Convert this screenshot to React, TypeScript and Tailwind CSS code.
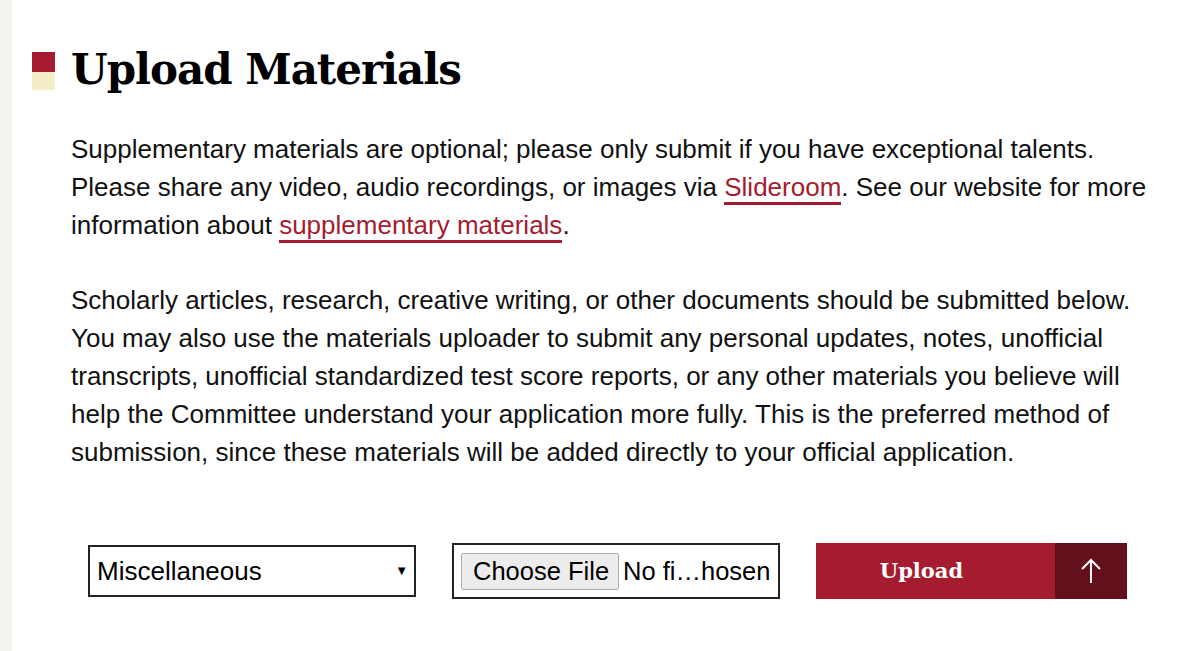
import React from "react";

export default function App() {
  const link = "border-b-[3px] border-[#a51c30] text-[#a51c30]";
  return (
    <div className="flex min-h-[651px] w-[1200px] bg-white" style={{ fontFamily: '"Liberation Sans", Arial, sans-serif' }}>
      <div className="w-[12px] shrink-0 bg-[#f2f2ef]" />
      <div className="flex-1 pl-[20px] pr-[20px]">
        <div className="mt-[52px] flex items-start">
          <div className="flex w-[23px] flex-col">
            <div className="h-[20px] bg-[#a51c30]" />
            <div className="h-[18px] bg-[#f5ecc8]" />
          </div>
          <h1
            className="ml-[16px] mt-[-8px] text-[42px] font-bold leading-[52px] tracking-[-1px] text-black"
            style={{ fontFamily: '"DejaVu Serif", serif' }}
          >
            Upload Materials
          </h1>
        </div>
        <div className="ml-[39px] mt-[34px] whitespace-nowrap text-[26px] leading-[38px] text-[#111]">
          <p>
            Supplementary materials are optional; please only submit if you have exceptional talents.
            <br />
            Please share any video, audio recordings, or images via <a className={link}>Slideroom</a>. See our website
            for more
            <br />
            information about <a className={link}>supplementary materials</a>.
          </p>
          <p className="mt-[37px]">
            Scholarly articles, research, creative writing, or other documents should be submitted below.
            <br />
            You may also use the materials uploader to submit any personal updates, notes, unofficial
            <br />
            transcripts, unofficial standardized test score reports, or any other materials you believe will
            <br />
            help the Committee understand your application more fully. This is the preferred method of
            <br />
            submission, since these materials will be added directly to your official application.
          </p>
        </div>
        <div className="ml-[56px] mt-[72px] flex items-center whitespace-nowrap">
          <div className="flex h-[52px] w-[328px] items-center justify-between border-2 border-[#222] pl-[7px] pr-[6px] text-[26px] text-black">
            <span>Miscellaneous</span>
            <span className="text-[13px]">▼</span>
          </div>
          <div className="ml-[36px] flex h-[56px] w-[328px] items-center border-2 border-[#222] pl-[7px] text-[25.5px] text-black">
            <div className="flex h-[37px] items-center rounded-[2px] border border-[#adadad] bg-[#ececec] pl-[11px] pr-[9px]">
              Choose File
            </div>
            <span className="ml-[4px]">No fi…hosen</span>
          </div>
          <div className="ml-[36px] flex h-[56px] w-[311px]">
            <div
              className="flex flex-1 items-center justify-center bg-[#a51c30] pr-[28px] text-[21px] font-bold text-white"
              style={{ fontFamily: '"DejaVu Serif", serif' }}
            >
              Upload
            </div>
            <div className="flex w-[72px] items-center justify-center bg-[#63101c]">
              <svg width="22" height="26" viewBox="0 0 22 26" fill="none" stroke="white" strokeWidth="2">
                <path d="M11 25V2M2 11l9-9 9 9" />
              </svg>
            </div>
          </div>
        </div>
      </div>
    </div>
  );
}
